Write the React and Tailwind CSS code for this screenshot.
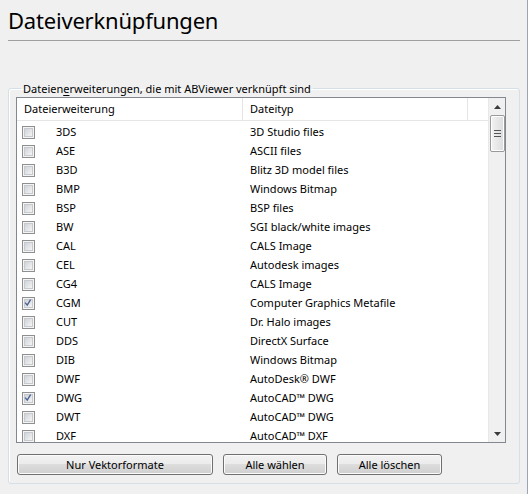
import { useState } from "react";

const rows = [
  ["3DS", "3D Studio files", false],
  ["ASE", "ASCII files", false],
  ["B3D", "Blitz 3D model files", false],
  ["BMP", "Windows Bitmap", false],
  ["BSP", "BSP files", false],
  ["BW", "SGI black/white images", false],
  ["CAL", "CALS Image", false],
  ["CEL", "Autodesk images", false],
  ["CG4", "CALS Image", false],
  ["CGM", "Computer Graphics Metafile", true],
  ["CUT", "Dr. Halo images", false],
  ["DDS", "DirectX Surface", false],
  ["DIB", "Windows Bitmap", false],
  ["DWF", "AutoDesk® DWF", false],
  ["DWG", "AutoCAD™ DWG", true],
  ["DWT", "AutoCAD™ DWG", false],
  ["DXF", "AutoCAD™ DXF", false],
];

function Check({ checked, onClick }) {
  return (
    <span
      onClick={onClick}
      className="w-[13px] h-[13px] border border-[#8e8f8f] bg-[#f4f4f4] p-[1px] flex relative"
    >
      <span className="flex-1 border border-[#c6c9cd] bg-gradient-to-br from-[#d0d3d8] to-[#f4f4f4]" />
      {checked && (
        <svg viewBox="0 0 13 13" className="absolute inset-0 w-[11px] h-[11px]">
          <path d="M2.5 5.5 L5 8.5 L9 2" fill="none" stroke="#4a5f94" strokeWidth="1.6" />
        </svg>
      )}
    </span>
  );
}

function Button({ children, w }) {
  return (
    <button
      className={`${w} h-[21px] border border-[#707070] rounded-[3px] shadow-[inset_0_0_0_1px_#fbfbfb] bg-[linear-gradient(#f2f2f2_0%,#ebebeb_50%,#dddddd_50%,#cfcfcf_100%)] text-[11px] text-black leading-none`}
    >
      {children}
    </button>
  );
}

export default function App() {
  const [items, setItems] = useState(rows);

  const toggle = (i) =>
    setItems(items.map((r, j) => (j === i ? [r[0], r[1], !r[2]] : r)));

  return (
    <div
      className="w-[528px] h-[494px] bg-[#f0f0f0] border-r border-[#9aa6b4] text-black"
      style={{ fontFamily: '"Segoe UI", "Noto Sans", sans-serif' }}
    >
      {/* Title */}
      <div className="h-[40px] pl-2 pt-[5px] text-[22px] leading-[30px] tracking-[-0.2px]">
        Dateiverknüpfungen
      </div>
      <div className="ml-2 w-[512px] h-px bg-[#a0a0a0]" />

      {/* Group box */}
      <fieldset className="ml-2 mt-[40px] w-[512px] h-[403px] border border-[#d5dfe5] rounded-[3px] pl-[7px] shadow-[inset_1px_1px_0_#ffffff]">
        <legend className="ml-[5px] px-[2px] text-[11px] leading-[15px]">
          Dateien<span className="underline underline-offset-2">e</span>rweiterungen, die mit ABViewer verknüpft sind
        </legend>

        {/* List view */}
        <div className="mt-px w-[490px] h-[346px] border border-[#828790] bg-white flex overflow-hidden">
          <div className="flex-1 flex flex-col overflow-hidden">
            <div className="h-[23px] flex shrink-0 border-b border-[#e5e5e5] text-[11px]">
              <div className="w-[226px] pl-[7px] flex items-center border-r border-[#e5e5e5]">
                Dateierweiterung
              </div>
              <div className="w-[225px] pl-[7px] flex items-center border-r border-[#e5e5e5]">
                Dateityp
              </div>
              <div className="flex-1" />
            </div>
            <div className="flex flex-col pt-[2px]">
              {items.map((r, i) => (
                <div key={r[0]} className="h-[19px] shrink-0 flex items-center text-[11px]">
                  <div className="w-[39px] pl-[5px]">
                    <Check checked={r[2]} onClick={() => toggle(i)} />
                  </div>
                  <div className="w-[194px]">{r[0]}</div>
                  <div>{r[1]}</div>
                </div>
              ))}
            </div>
          </div>

          {/* Scrollbar */}
          <div className="w-[17px] shrink-0 bg-[#f0f0f0] border-l border-[#e8e8e8] flex flex-col items-center">
            <div className="h-[17px] w-full flex items-center justify-center">
              <svg viewBox="0 0 7 4" className="w-[7px] h-[4px]">
                <path d="M0 4 L3.5 0 L7 4 Z" fill="#3b3b3b" />
              </svg>
            </div>
            <div className="w-[15px] h-[37px] border border-[#9a9a9a] rounded-[2px] bg-gradient-to-r from-[#f3f3f3] to-[#dcdcdc] shadow-[inset_0_0_0_1px_#ffffff] flex flex-col items-center justify-center gap-[2px]">
              <span className="w-[7px] h-px bg-[#555]" />
              <span className="w-[7px] h-px bg-[#555]" />
              <span className="w-[7px] h-px bg-[#555]" />
            </div>
            <div className="flex-1" />
            <div className="h-[17px] w-full flex items-center justify-center">
              <svg viewBox="0 0 7 4" className="w-[7px] h-[4px]">
                <path d="M0 0 L7 0 L3.5 4 Z" fill="#3b3b3b" />
              </svg>
            </div>
          </div>
        </div>

        {/* Buttons */}
        <div className="mt-[11px] flex gap-[10px] pl-px">
          <Button w="w-[196px]">Nur Vektorformate</Button>
          <Button w="w-[104px]">Alle wählen</Button>
          <Button w="w-[105px]">Alle löschen</Button>
        </div>
      </fieldset>
    </div>
  );
}
